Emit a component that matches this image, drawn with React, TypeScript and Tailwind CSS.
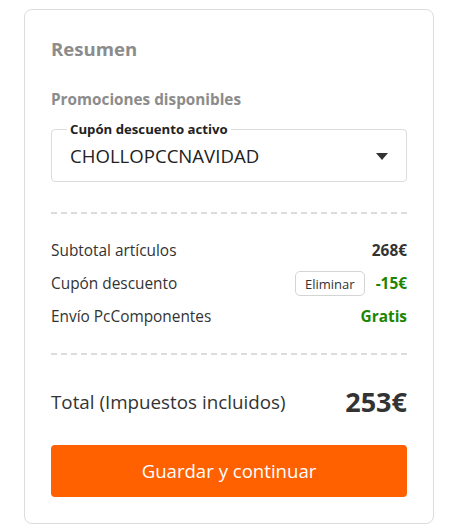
export default function App() {
  const dashed =
    'h-[2px] bg-[repeating-linear-gradient(to_right,#dcdcdc_0,#dcdcdc_6px,transparent_6px,transparent_10px)]'

  return (
    <div className="min-h-screen bg-white font-['Open_Sans',sans-serif] text-[#333]">
      <div className="ml-[24px] mt-[9px] w-[410px] rounded-lg border border-[#dcdcdc] px-[26px] pb-[26px] pt-[27px]">
        <h2 className="text-[18.6px] font-bold leading-[24px] text-[#8c8c8c]">Resumen</h2>

        <h3 className="mt-[28px] text-[15.3px] font-bold leading-[20px] text-[#8c8c8c]">
          Promociones disponibles
        </h3>

        <div className="relative mt-[20px] flex h-[53px] items-center rounded border border-[#dcdcdc] pl-[18px] pr-[18px]">
          <span className="absolute left-[15px] top-[-10px] bg-white px-[3px] text-[13.2px] font-bold leading-[18px] text-[#222]">
            Cupón descuento activo
          </span>
          <span className="flex-1 text-[18.6px] leading-[24px] text-[#222]">CHOLLOPCCNAVIDAD</span>
          <svg width="12" height="7" viewBox="0 0 12 7" className="mt-[1px]">
            <path d="M0 0h12L6 7z" fill="#333" />
          </svg>
        </div>

        <div className={`mt-[30px] ${dashed}`} />

        <div className="mt-[20px] flex flex-col text-[15.4px]">
          <div className="flex h-[33px] items-center justify-between">
            <span>Subtotal artículos</span>
            <span className="font-bold">268€</span>
          </div>
          <div className="flex h-[33px] items-center justify-between">
            <span>Cupón descuento</span>
            <div className="flex items-center gap-[11px]">
              <button className="h-[25px] rounded-[5px] border border-[#d4d4d4] bg-white px-[9px] text-[13px] leading-[18px] text-[#333]">
                Eliminar
              </button>
              <span className="font-bold text-[#1e8500]">-15€</span>
            </div>
          </div>
          <div className="flex h-[33px] items-center justify-between">
            <span>Envío PcComponentes</span>
            <span className="font-bold text-[#1e8500]">Gratis</span>
          </div>
        </div>

        <div className={`mt-[20px] ${dashed}`} />

        <div className="mt-[27px] flex h-[40px] items-center justify-between">
          <span className="text-[18.8px]">Total (Impuestos incluidos)</span>
          <span className="text-[27px] font-bold">253€</span>
        </div>

        <button className="mt-[23px] flex h-[52px] w-full items-center justify-center rounded bg-[#ff6000] text-[18.6px] text-white">
          Guardar y continuar
        </button>
      </div>
    </div>
  )
}
